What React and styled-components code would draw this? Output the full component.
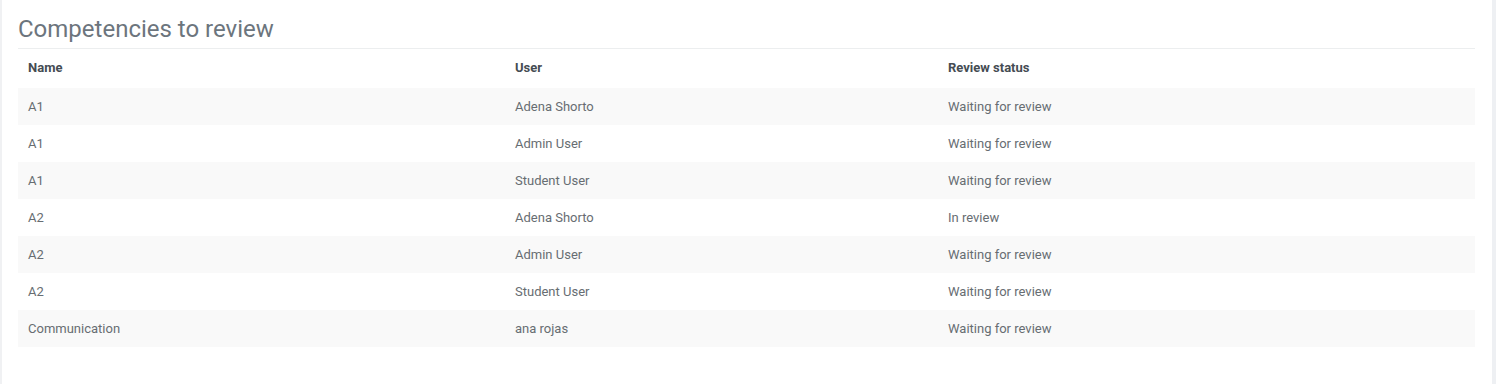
import React from "react";
import styled, { createGlobalStyle } from "styled-components";

const rows = [
  { name: "A1", user: "Adena Shorto", status: "Waiting for review" },
  { name: "A1", user: "Admin User", status: "Waiting for review" },
  { name: "A1", user: "Student User", status: "Waiting for review" },
  { name: "A2", user: "Adena Shorto", status: "In review" },
  { name: "A2", user: "Admin User", status: "Waiting for review" },
  { name: "A2", user: "Student User", status: "Waiting for review" },
  { name: "Communication", user: "ana rojas", status: "Waiting for review" },
];

const GlobalStyle = createGlobalStyle`
  body {
    margin: 0;
    background: #eef0f3;
    font-family: Roboto, "Liberation Sans", sans-serif;
  }
`;

const Page = styled.div`
  display: flex;
  height: 384px;
  padding-right: 4px;
`;

const Card = styled.div`
  flex: 1;
  background: #fff;
  border-left: 2px solid #f0f1f3;
  padding: 12px 17px 0 16px;
`;

const Title = styled.h2`
  margin: 0;
  font-size: 24px;
  font-weight: 400;
  color: #6c757d;
  line-height: 34px;
  padding-bottom: 2px;
`;

const Table = styled.table`
  width: 100%;
  border-collapse: collapse;
  table-layout: fixed;
  font-size: 13px;
`;

const Head = styled.th`
  box-sizing: border-box;
  text-align: left;
  font-weight: 700;
  color: #454c53;
  padding: 0 10px 1px;
  height: 39px;
  border-top: 1px solid #eceeef;
  width: ${(p) => p.$w || "auto"};
`;

const Row = styled.tr`
  background: ${(p) => (p.$striped ? "#f9f9f9" : "#fff")};
`;

const Cell = styled.td`
  color: #676d72;
  padding: 0 10px;
  height: 37px;
`;

export default function App() {
  return (
    <>
      <GlobalStyle />
      <Page>
        <Card>
          <Title>Competencies to review</Title>
          <Table>
            <thead>
              <tr>
                <Head $w="487px">Name</Head>
                <Head $w="433px">User</Head>
                <Head>Review status</Head>
              </tr>
            </thead>
            <tbody>
              {rows.map((r, i) => (
                <Row key={i} $striped={i % 2 === 0}>
                  <Cell>{r.name}</Cell>
                  <Cell>{r.user}</Cell>
                  <Cell>{r.status}</Cell>
                </Row>
              ))}
            </tbody>
          </Table>
        </Card>
      </Page>
    </>
  );
}
